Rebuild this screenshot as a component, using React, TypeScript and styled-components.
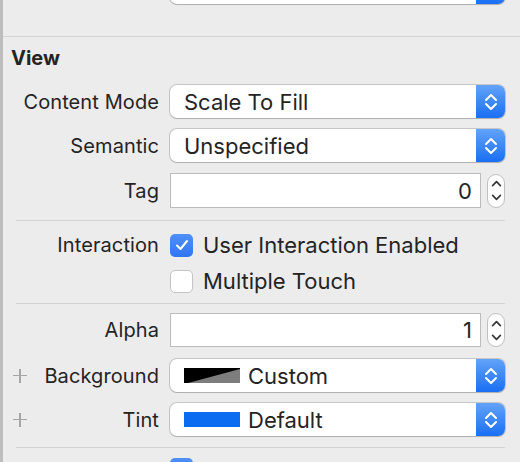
import React from 'react';
import styled, { createGlobalStyle } from 'styled-components';

const GlobalStyle = createGlobalStyle`
  html, body {
    margin: 0;
    padding: 0;
    background: #ececec;
  }
  body {
    font-family: Inter, "Noto Sans", "Liberation Sans", sans-serif;
    color: #242424;
  }
`;

const labelSize = 20;
const valueSize = 22;

const Panel = styled.div`
  width: 517px;
  height: 462px;
  overflow: hidden;
  background: #ececec;
  border-left: 3px solid #bdbdbd;
  display: flex;
  flex-direction: column;
`;

const Row = styled.div<{ $top: number; $height: number }>`
  display: grid;
  grid-template-columns: 156px 1fr;
  column-gap: 11px;
  align-items: center;
  margin-top: ${(p) => p.$top}px;
  height: ${(p) => p.$height}px;
  padding-right: 15px;
  flex-shrink: 0;
`;

const Label = styled.div`
  display: flex;
  align-items: center;
  justify-content: flex-end;
  font-size: ${labelSize}px;
  white-space: nowrap;
  letter-spacing: 0.1px;
`;

const PlusLabel = styled(Label)`
  justify-content: space-between;
  padding-left: 10px;
`;

const Plus = styled.span`
  position: relative;
  width: 14px;
  height: 14px;
  &::before,
  &::after {
    content: '';
    position: absolute;
    background: #a6a6a6;
  }
  &::before {
    left: 0;
    right: 0;
    top: 6px;
    height: 1.5px;
  }
  &::after {
    top: 0;
    bottom: 0;
    left: 6px;
    width: 1.5px;
  }
`;

const Divider = styled.div<{ $top: number; $full?: boolean }>`
  height: 1px;
  background: #d3d3d3;
  margin-top: ${(p) => p.$top}px;
  margin-left: ${(p) => (p.$full ? 0 : 13)}px;
  margin-right: ${(p) => (p.$full ? 0 : 15)}px;
  flex-shrink: 0;
`;

const Header = styled.div`
  margin-top: 9px;
  height: 24px;
  line-height: 24px;
  padding-left: 8px;
  font-size: ${labelSize}px;
  font-weight: 700;
  flex-shrink: 0;
`;

const Popup = styled.div`
  display: flex;
  align-items: stretch;
  height: 100%;
  background: #fff;
  border-radius: 7px;
  box-shadow: 0 0 0 1px rgba(0, 0, 0, 0.16), 0 1px 1px rgba(0, 0, 0, 0.12);
`;

const PopupValue = styled.div`
  flex: 1;
  display: flex;
  align-items: center;
  gap: 8px;
  padding-left: 14px;
  font-size: ${valueSize}px;
  white-space: nowrap;
`;

const PopupArrows = styled.div`
  width: 29px;
  display: flex;
  align-items: center;
  justify-content: center;
  border-radius: 0 7px 7px 0;
  background: linear-gradient(#62a3f9, #1a6ff3);
`;

const Swatch = styled.span<{ $color: string }>`
  width: 56px;
  height: 15px;
  background: ${(p) => p.$color};
`;

const FieldGroup = styled.div`
  display: flex;
  align-items: center;
  gap: 6px;
  height: 100%;
`;

const Field = styled.div`
  flex: 1;
  height: 100%;
  box-sizing: border-box;
  background: #fff;
  border: 1px solid #bcbcbc;
  display: flex;
  align-items: center;
  justify-content: flex-end;
  padding-right: 8px;
  font-size: ${valueSize}px;
`;

const Stepper = styled.div`
  width: 18px;
  height: 34px;
  box-sizing: border-box;
  border-radius: 9px;
  background: #fff;
  border: 1px solid #bfbfbf;
  display: flex;
  align-items: center;
  justify-content: center;
`;

const CheckRow = styled.div`
  display: flex;
  align-items: center;
  gap: 10px;
  font-size: ${valueSize}px;
  white-space: nowrap;
`;

const Box = styled.span<{ $checked?: boolean }>`
  width: 23px;
  height: 23px;
  box-sizing: border-box;
  border-radius: 5px;
  display: flex;
  align-items: center;
  justify-content: center;
  flex-shrink: 0;
  background: ${(p) => (p.$checked ? 'linear-gradient(#4f90f7, #2f76f3)' : '#fff')};
  border: ${(p) => (p.$checked ? 'none' : '1px solid #c4c4c4')};
`;

type ChevronProps = { color: string; width: number; height: number; stroke: number; tip: number };

// up chevron on top, down chevron at the bottom; tip = how tall each one is
const Chevrons = ({ color, width, height, stroke, tip }: ChevronProps) => {
  const w = width;
  const h = height;
  const m = stroke;
  return (
    <svg width={w} height={h} viewBox={`0 0 ${w} ${h}`} fill="none">
      <path
        d={`M${m} ${m + tip} L${w / 2} ${m} L${w - m} ${m + tip}`}
        stroke={color}
        strokeWidth={stroke}
        strokeLinecap="round"
        strokeLinejoin="round"
      />
      <path
        d={`M${m} ${h - m - tip} L${w / 2} ${h - m} L${w - m} ${h - m - tip}`}
        stroke={color}
        strokeWidth={stroke}
        strokeLinecap="round"
        strokeLinejoin="round"
      />
    </svg>
  );
};

const Check = () => (
  <svg width="14" height="12" viewBox="0 0 14 12" fill="none">
    <path d="M2 6.5 L5.5 10 L12 2" stroke="#fff" strokeWidth="2" strokeLinecap="round" strokeLinejoin="round" />
  </svg>
);

const BackgroundSwatch = () => (
  <svg width="56" height="15" viewBox="0 0 56 15">
    <polygon points="0,0 56,0 56,15 0,15" fill="#7d7d7d" />
    <polygon points="0,0 56,0 56,1 4,15 0,15" fill="#000" />
  </svg>
);

type PopupProps = { value: string; swatch?: React.ReactNode };

const PopupButton = ({ value, swatch }: PopupProps) => (
  <Popup>
    <PopupValue>
      {swatch}
      {value}
    </PopupValue>
    <PopupArrows>
      <Chevrons color="#fff" width={14} height={18} stroke={2} tip={5} />
    </PopupArrows>
  </Popup>
);

const NumberField = ({ value }: { value: string }) => (
  <FieldGroup>
    <Field>{value}</Field>
    <Stepper>
      <Chevrons color="#333" width={11} height={21} stroke={1.6} tip={4} />
    </Stepper>
  </FieldGroup>
);

const App = () => (
  <>
    <GlobalStyle />
    <Panel>
      <Row $top={-29} $height={33}>
        <Label />
        <PopupButton value="" />
      </Row>
      <Divider $top={32} $full />
      <Header>View</Header>

      <Row $top={15} $height={33}>
        <Label>Content Mode</Label>
        <PopupButton value="Scale To Fill" />
      </Row>
      <Row $top={11} $height={33}>
        <Label>Semantic</Label>
        <PopupButton value="Unspecified" />
      </Row>
      <Row $top={11} $height={35}>
        <Label>Tag</Label>
        <NumberField value="0" />
      </Row>

      <Divider $top={12} />

      <Row $top={11} $height={24}>
        <Label>Interaction</Label>
        <CheckRow>
          <Box $checked>
            <Check />
          </Box>
          User Interaction Enabled
        </CheckRow>
      </Row>
      <Row $top={12} $height={24}>
        <Label />
        <CheckRow>
          <Box />
          Multiple Touch
        </CheckRow>
      </Row>

      <Divider $top={11} />

      <Row $top={9} $height={34}>
        <Label>Alpha</Label>
        <NumberField value="1" />
      </Row>
      <Row $top={12} $height={33}>
        <PlusLabel>
          <Plus />
          Background
        </PlusLabel>
        <PopupButton value="Custom" swatch={<BackgroundSwatch />} />
      </Row>
      <Row $top={11} $height={33}>
        <PlusLabel>
          <Plus />
          Tint
        </PlusLabel>
        <PopupButton value="Default" swatch={<Swatch $color="#0b6cf2" />} />
      </Row>

      <Divider $top={11} />

      <Row $top={10} $height={23}>
        <Label />
        <CheckRow>
          <Box $checked />
        </CheckRow>
      </Row>
    </Panel>
  </>
);

export default App;
